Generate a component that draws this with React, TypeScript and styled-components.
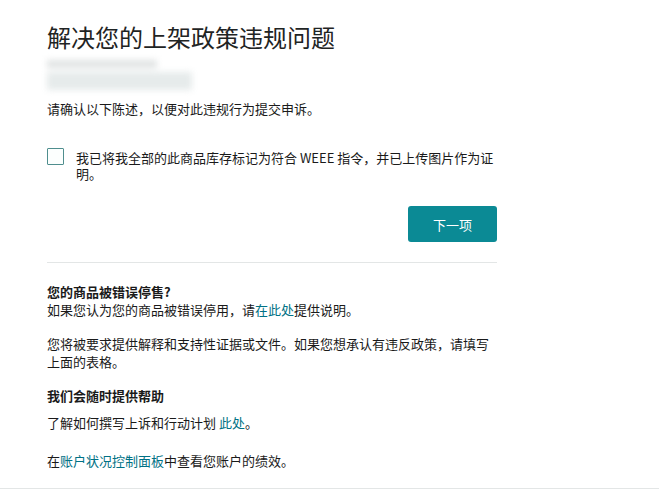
import * as React from "react";
import styled, { createGlobalStyle } from "styled-components";

const GlobalStyle = createGlobalStyle`
  body {
    margin: 0;
    background: #ffffff;
    font-family: "Noto Sans CJK SC", "Liberation Sans", sans-serif;
    color: #111111;
  }
`;

const colors = {
  primary: "#0b8a95",
  link: "#007185",
  text: "#1a1a1a",
  line: "#e3e6e6",
};

const Page = styled.div`
  min-height: 489px;
  border-bottom: 1px solid ${colors.line};
  padding: 20px 0 0 47px;
  box-sizing: border-box;
`;

const Column = styled.div`
  width: 450px;
  display: flex;
  flex-direction: column;
`;

const Title = styled.h1`
  margin: 0;
  font-size: 24px;
  font-weight: 400;
  line-height: 34px;
  color: #1f2424;
`;

const Redacted = styled.div`
  margin-top: 6px;
  height: 32px;
  display: flex;
  flex-direction: column;
  gap: 4px;
  filter: blur(3px);
`;

const RedactedBar = styled.div<{ $w: number; $h: number; $tone: string }>`
  height: ${(p) => p.$h}px;
  width: ${(p) => p.$w}px;
  background: ${(p) => p.$tone};
`;

const Text = styled.p`
  margin: 0;
  font-size: 13px;
  line-height: 18px;
  color: ${colors.text};
`;

const Instruction = styled(Text)`
  margin-top: 8px;
`;

const CheckRow = styled.label`
  margin-top: 30px;
  display: flex;
  align-items: flex-start;
  gap: 12px;
`;

const Box = styled.span`
  flex: none;
  width: 15px;
  height: 15px;
  border: 1px solid #4f8e8e;
  border-radius: 1px;
  background: #fcfffe;
`;

const CheckText = styled(Text)`
  margin-top: 2px;
  line-height: 16px;
`;

const Actions = styled.div`
  margin-top: 24px;
  display: flex;
  justify-content: flex-end;
`;

const Button = styled.button`
  width: 89px;
  height: 36px;
  border: none;
  border-radius: 3px;
  background: ${colors.primary};
  color: #ffffff;
  font-family: inherit;
  font-size: 13px;
`;

const Divider = styled.hr`
  margin: 20px 0 0;
  border: none;
  border-top: 1px solid ${colors.line};
`;

const Section = styled.div<{ $top: number }>`
  margin-top: ${(p) => p.$top}px;
`;

const Heading = styled(Text)`
  font-weight: 700;
`;

const Link = styled.a`
  color: ${colors.link};
  text-decoration: none;
`;

const App = () => {
  return (
    <>
      <GlobalStyle />
      <Page>
        <Column>
          <Title>解决您的上架政策违规问题</Title>
          <Redacted>
            <RedactedBar $w={110} $h={8} $tone="#e0e3e3" />
            <RedactedBar $w={145} $h={18} $tone="#e6ebeb" />
          </Redacted>
          <Instruction>请确认以下陈述，以便对此违规行为提交申诉。</Instruction>

          <CheckRow>
            <Box />
            <CheckText>
              我已将我全部的此商品库存标记为符合 WEEE 指令，并已上传图片作为证明。
            </CheckText>
          </CheckRow>

          <Actions>
            <Button type="button">下一项</Button>
          </Actions>

          <Divider />

          <Section $top={20}>
            <Heading>您的商品被错误停售?</Heading>
            <Text>
              如果您认为您的商品被错误停用，请<Link href="#">在此处</Link>提供说明。
            </Text>
          </Section>

          <Section $top={16}>
            <Text>
              您将被要求提供解释和支持性证据或文件。如果您想承认有违反政策，请填写上面的表格。
            </Text>
          </Section>

          <Section $top={16}>
            <Heading>我们会随时提供帮助</Heading>
          </Section>

          <Section $top={9}>
            <Text>
              了解如何撰写上诉和行动计划 <Link href="#">此处</Link>。
            </Text>
          </Section>

          <Section $top={20}>
            <Text>
              在<Link href="#">账户状况控制面板</Link>中查看您账户的绩效。
            </Text>
          </Section>
        </Column>
      </Page>
    </>
  );
};

export default App;
